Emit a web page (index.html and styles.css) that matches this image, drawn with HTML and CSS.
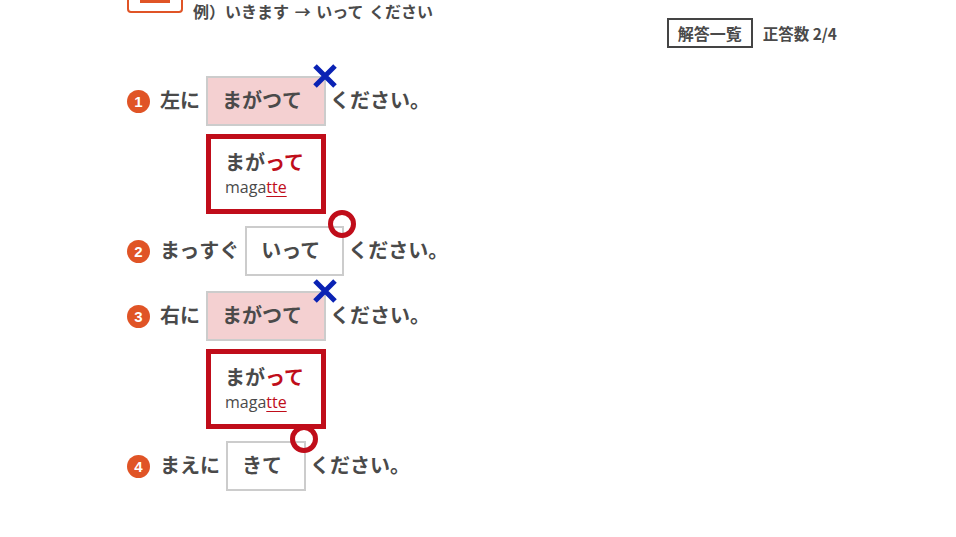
FILE: index.html
```html
<!DOCTYPE html>
<html lang="ja">
<head>
<meta charset="utf-8">
<link rel="stylesheet" href="styles.css">
</head>
<body>
<div class="page">
  <div class="example">
    <div class="ex-badge"><span class="ex-badge-inner"></span></div>
    <div class="ex-text">例）いきます → いって ください</div>
  </div>
  <div class="score">
    <span class="list-btn">解答一覧</span>
    <span class="score-text">正答数 2/4</span>
  </div>
  <ol class="questions">
    <li class="q">
      <div class="q-row">
        <span class="num">1</span>
        <span class="label">左に</span>
        <span class="answer wrong">まがつて<svg class="mark-x" viewBox="0 0 26 26"><path d="M3 3 L23 23 M23 3 L3 23" stroke="#0a22b4" stroke-width="5" fill="none"/></svg></span>
        <span class="rest">ください。</span>
      </div>
      <div class="correction">
        <div class="c-jp">まが<em>って</em></div>
        <div class="c-ro">maga<em>tte</em></div>
      </div>
    </li>
    <li class="q">
      <div class="q-row">
        <span class="num">2</span>
        <span class="label">まっすぐ</span>
        <span class="answer">いって<svg class="mark-o" viewBox="0 0 28 28"><circle cx="14" cy="14" r="11.5" stroke="#c00d1a" stroke-width="5" fill="none"/></svg></span>
        <span class="rest">ください。</span>
      </div>
    </li>
    <li class="q">
      <div class="q-row">
        <span class="num">3</span>
        <span class="label">右に</span>
        <span class="answer wrong">まがつて<svg class="mark-x" viewBox="0 0 26 26"><path d="M3 3 L23 23 M23 3 L3 23" stroke="#0a22b4" stroke-width="5" fill="none"/></svg></span>
        <span class="rest">ください。</span>
      </div>
      <div class="correction">
        <div class="c-jp">まが<em>って</em></div>
        <div class="c-ro">maga<em>tte</em></div>
      </div>
    </li>
    <li class="q">
      <div class="q-row">
        <span class="num">4</span>
        <span class="label">まえに</span>
        <span class="answer">きて<svg class="mark-o" viewBox="0 0 28 28"><circle cx="14" cy="14" r="11.5" stroke="#c00d1a" stroke-width="5" fill="none"/></svg></span>
        <span class="rest">ください。</span>
      </div>
    </li>
  </ol>
</div>
</body>
</html>
```
FILE: styles.css
```css
* { box-sizing: border-box; }
html, body { margin: 0; padding: 0; background: #fff; overflow: hidden; }
body {
  font-family: "Noto Sans CJK JP", "Noto Sans", sans-serif;
  color: #4a4a4a;
  font-weight: 700;
}
.page {
  width: 710px;
  margin-left: 127px;
}
.example {
  display: flex;
  align-items: flex-start;
  height: 13px;
}
.ex-badge {
  flex: none;
  width: 56px;
  height: 33px;
  margin-top: -20px;
  border: 2px solid #e05426;
  border-radius: 4px;
  display: flex;
  justify-content: center;
}
.ex-badge-inner {
  display: block;
  width: 30px;
  height: 21px;
  background: #e05426;
}
.ex-text {
  margin-left: 10px;
  font-size: 16px;
  line-height: 20px;
  margin-top: 1px;
  word-spacing: 2px;
}
.score {
  display: flex;
  justify-content: flex-end;
  align-items: center;
  margin-top: 5px;
  gap: 10px;
}
.list-btn {
  border: 2px solid #444;
  height: 30px;
  width: 86px;
  font-size: 16px;
  line-height: 26px;
  text-align: center;
}
.score-text {
  font-size: 15.5px;
  margin-bottom: 1px;
}
.questions {
  list-style: none;
  margin: 28px 0 0;
  padding: 0;
}
.q { margin-bottom: 15px; }
.q-row {
  display: flex;
  align-items: center;
  height: 50px;
}
.num {
  width: 23px;
  height: 23px;
  border-radius: 50%;
  background: #e05426;
  color: #fff;
  font-family: "Liberation Sans", sans-serif;
  font-size: 15px;
  line-height: 23px;
  text-align: center;
  margin-right: 10px;
}
.label {
  font-size: 20px;
  line-height: 26px;
  margin-right: 6px;
  margin-bottom: 3px;
}
.answer {
  position: relative;
  height: 50px;
  border: 2px solid #ccc;
  padding: 0 22px 3px 14px;
  font-size: 20px;
  line-height: 43px;
  background: #fff;
}
.answer.wrong { background: #f4d0d1; }
.rest {
  font-size: 20px;
  line-height: 26px;
  margin-left: 4px;
  margin-bottom: 3px;
}
.mark-x {
  position: absolute;
  width: 26px;
  height: 26px;
  right: -14px;
  top: -15px;
}
.mark-o {
  position: absolute;
  width: 28px;
  height: 28px;
  right: -14px;
  top: -18px;
}
.correction {
  margin: 8px 0 -3px 79px;
  width: 120px;
  height: 80px;
  border: 5px solid #c00d1a;
  padding: 10px 0 0 14px;
}
.c-jp {
  font-size: 20px;
  line-height: 26px;
}
.c-jp em, .c-ro em {
  font-style: normal;
  color: #c00d1a;
}
.c-ro {
  font-family: "Open Sans", "Noto Sans", sans-serif;
  font-weight: 400;
  font-size: 16px;
  line-height: 24px;
}
.c-ro em {
  text-decoration: underline;
  text-decoration-color: #c00d1a;
  text-underline-offset: 3px;
}
```
